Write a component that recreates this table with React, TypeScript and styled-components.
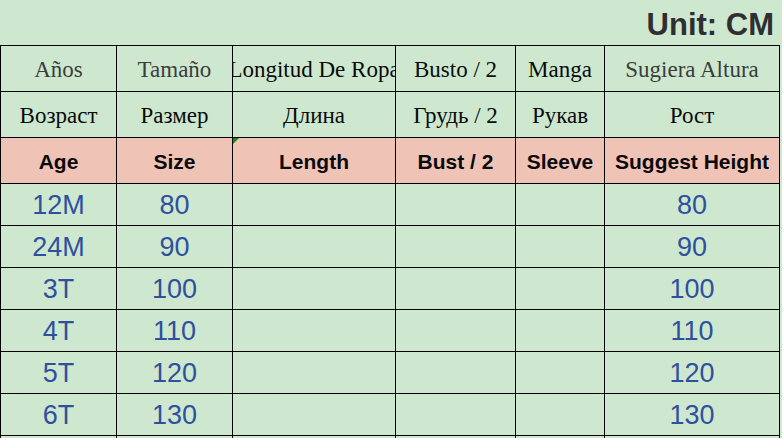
import React from "react";
import styled, { createGlobalStyle, css } from "styled-components";

const GlobalStyle = createGlobalStyle`
  html, body {
    margin: 0;
    padding: 0;
    background: #cde8cf;
    overflow: hidden;
  }
  #root {
    width: 782px;
    height: 438px;
    overflow: hidden;
  }
`;

const Page = styled.div`
  width: 782px;
  height: 438px;
  background: #cde8cf;
  display: flex;
  flex-direction: column;
  overflow: hidden;
`;

const UnitBar = styled.div`
  height: 45px;
  flex: 0 0 45px;
  display: flex;
  justify-content: flex-end;
  padding-right: 8px;
  font-family: "Liberation Sans", Arial, sans-serif;
  font-weight: 700;
  font-size: 31px;
  line-height: 50px;
  color: #2f2f33;
`;

const Grid = styled.div`
  display: grid;
  grid-template-columns: 116px 116px 163px 120px 89px 175px;
  grid-template-rows: 46px 46px 46px;
  grid-auto-rows: 42px;
  width: 780px;
  box-sizing: border-box;
  border-left: 1px solid #000;
  border-top: 1px solid #000;
`;

type Variant = "es" | "ru" | "en" | "data";

const Cell = styled.div<{ $variant: Variant; $dim?: boolean; $flag?: boolean }>`
  position: relative;
  box-sizing: border-box;
  border-right: 1px solid #000;
  border-bottom: 1px solid #000;
  display: flex;
  align-items: center;
  justify-content: center;
  white-space: nowrap;
  overflow: hidden;
  background: #cde8cf;

  ${({ $variant, $dim }) =>
    $variant === "es" || $variant === "ru"
      ? css`
          font-family: "Liberation Serif", "Times New Roman", serif;
          font-size: 23px;
          padding-top: 2px;
          color: ${$dim ? "#3c3c3c" : "#0a0a0a"};
        `
      : $variant === "en"
      ? css`
          background: #f0c3b7;
          font-family: "Liberation Sans", Arial, sans-serif;
          font-weight: 700;
          font-size: 21px;
          padding-top: 3px;
          color: #0a0a0a;
        `
      : css`
          font-family: "Liberation Sans", Arial, sans-serif;
          font-size: 27px;
          padding-top: 2px;
          color: #30509e;
        `}

  ${({ $flag }) =>
    $flag &&
    css`
      &::before {
        content: "";
        position: absolute;
        left: 0;
        top: 0;
        border-top: 6px solid #138a13;
        border-right: 6px solid transparent;
      }
    `}
`;

const spanish: [string, boolean][] = [
  ["Años", true],
  ["Tamaño", true],
  ["Longitud De Ropa", false],
  ["Busto / 2", false],
  ["Manga", false],
  ["Sugiera Altura", true],
];

const russian = ["Возраст", "Размер", "Длина", "Грудь / 2", "Рукав", "Рост"];

const english = ["Age", "Size", "Length", "Bust / 2", "Sleeve", "Suggest Height"];

const rows = [
  ["12M", "80", "", "", "", "80"],
  ["24M", "90", "", "", "", "90"],
  ["3T", "100", "", "", "", "100"],
  ["4T", "110", "", "", "", "110"],
  ["5T", "120", "", "", "", "120"],
  ["6T", "130", "", "", "", "130"],
  ["", "", "", "", "", ""],
];

export default function App() {
  return (
    <>
      <GlobalStyle />
      <Page>
        <UnitBar>Unit: CM</UnitBar>
        <Grid>
          {spanish.map(([t, dim], i) => (
            <Cell key={`es${i}`} $variant="es" $dim={dim}>
              {t}
            </Cell>
          ))}
          {russian.map((t, i) => (
            <Cell key={`ru${i}`} $variant="ru">
              {t}
            </Cell>
          ))}
          {english.map((t, i) => (
            <Cell key={`en${i}`} $variant="en" $flag={i === 2}>
              {t}
            </Cell>
          ))}
          {rows.map((r, ri) =>
            r.map((t, ci) => (
              <Cell key={`d${ri}-${ci}`} $variant="data">
                {t}
              </Cell>
            ))
          )}
        </Grid>
      </Page>
    </>
  );
}
